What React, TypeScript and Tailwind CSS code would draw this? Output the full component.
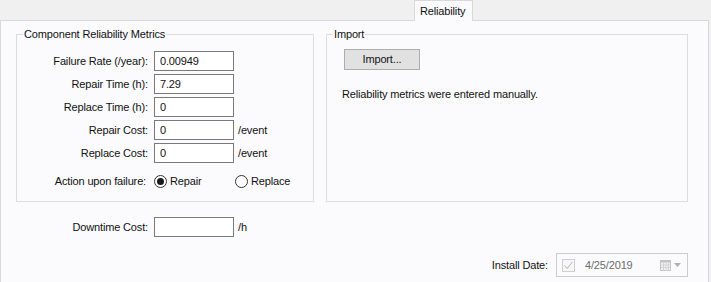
import React from "react";

const PANEL_BG = "bg-[#fbfbfd]";

const Field: React.FC<{ label: string; value: string; unit?: string; labelW?: string }> = ({ label, value, unit, labelW = "w-[131px]" }) => (
  <div className="flex items-center h-[20px]">
    <span className={`${labelW} text-right whitespace-nowrap`}>{label}</span>
    <div className="ml-[6px] w-[80px] h-[20px] border border-[#7a7a7a] bg-white pl-[5px] leading-[18px]">{value}</div>
    {unit && <span className="ml-[4px]">{unit}</span>}
  </div>
);

const Radio: React.FC<{ checked?: boolean; label: string }> = ({ checked, label }) => (
  <div className="flex items-center">
    <span className="w-[13px] h-[13px] rounded-full border border-[#333333] bg-white flex items-center justify-center">
      {checked && <span className="w-[7px] h-[7px] rounded-full bg-[#1a1a1a]" />}
    </span>
    <span className="ml-[3px]">{label}</span>
  </div>
);

export default function App() {
  return (
    <div className="w-[711px] h-[282px] overflow-hidden bg-[#f0f0f0] font-['Liberation_Sans',sans-serif] text-[11px] tracking-[-0.15px] text-[#111111]">
      {/* tab strip */}
      <div className="flex h-[20px]">
        <div className="w-[414px]" />
        <div className={`relative z-10 w-[59px] h-[21px] ${PANEL_BG} border-x border-t border-[#d9d9d9] pl-[5px] leading-[20px]`}>
          Reliability
        </div>
      </div>

      {/* panel */}
      <div className={`w-[709px] h-[262px] border-x border-t border-[#d9d9d9] ${PANEL_BG} pt-[13px] pl-[15px]`}>
        <div className="flex gap-[12px]">
          {/* Component Reliability Metrics */}
          <div className="w-[298px] h-[168px] border border-[#dcdcdc]">
            <div className={`-mt-[8px] ml-[6px] px-[1px] w-fit leading-[14px] ${PANEL_BG}`}>Component Reliability Metrics</div>
            <div className="mt-[10px] flex flex-col gap-[3px]">
              <Field label="Failure Rate (/year):" value="0.00949" />
              <Field label="Repair Time (h):" value="7.29" />
              <Field label="Replace Time (h):" value="0" />
              <Field label="Repair Cost:" value="0" unit="/event" />
              <Field label="Replace Cost:" value="0" unit="/event" />
            </div>
            <div className="mt-[8px] flex items-center h-[20px]">
              <span className="w-[129px] text-right">Action upon failure:</span>
              <div className="ml-[8px] w-[81px]">
                <Radio checked label="Repair" />
              </div>
              <Radio label="Replace" />
            </div>
          </div>

          {/* Import */}
          <div className="w-[362px] h-[168px] border border-[#dcdcdc]">
            <div className={`-mt-[8px] ml-[6px] px-[1px] w-fit leading-[14px] ${PANEL_BG}`}>Import</div>
            <div className="mt-[8px] ml-[17px] w-[76px] h-[21px] border border-[#adadad] bg-[#e1e1e1] flex items-center justify-center">
              Import...
            </div>
            <div className="mt-[17px] ml-[15px] leading-[14px]">Reliability metrics were entered manually.</div>
          </div>
        </div>

        {/* Downtime cost */}
        <div className="mt-[15px]">
          <Field label="Downtime Cost:" value="" unit="/h" labelW="w-[132px]" />
        </div>

        {/* Install date */}
        <div className="mt-[16px] w-[672px] flex items-center justify-end">
          <span>Install Date:</span>
          <div className="ml-[8px] w-[132px] h-[24px] border border-[#cccccc] bg-[#fbfbfd] flex items-center pl-[5px] pr-[6px]">
            <span className="w-[13px] h-[13px] border border-[#cfcfcf] bg-[#f7f7f7] flex items-center justify-center">
              <svg width="11" height="11" viewBox="0 0 11 11">
                <polyline points="1.5,5.5 4,8.5 9.5,2" fill="none" stroke="#b5b5b5" strokeWidth="1" />
              </svg>
            </span>
            <span className="ml-[10px] text-[#6d6d6d]">4/25/2019</span>
            <span className="ml-auto flex items-center gap-[3px]">
              <svg width="11" height="11" viewBox="0 0 11 11">
                <rect x="0.5" y="0.5" width="10" height="10" fill="#f2f2f2" stroke="#c4c4c4" />
                <rect x="0.5" y="0.5" width="10" height="2" fill="#c4c4c4" />
                <path d="M3.5 3v8M6 3v8M8.5 3v8M1 5h9M1 7.5h9" stroke="#d4d4d4" strokeWidth="1" />
              </svg>
              <svg width="7" height="4" viewBox="0 0 7 4">
                <polygon points="0,0 7,0 3.5,4" fill="#b0b0b0" />
              </svg>
            </span>
          </div>
        </div>
      </div>
    </div>
  );
}
